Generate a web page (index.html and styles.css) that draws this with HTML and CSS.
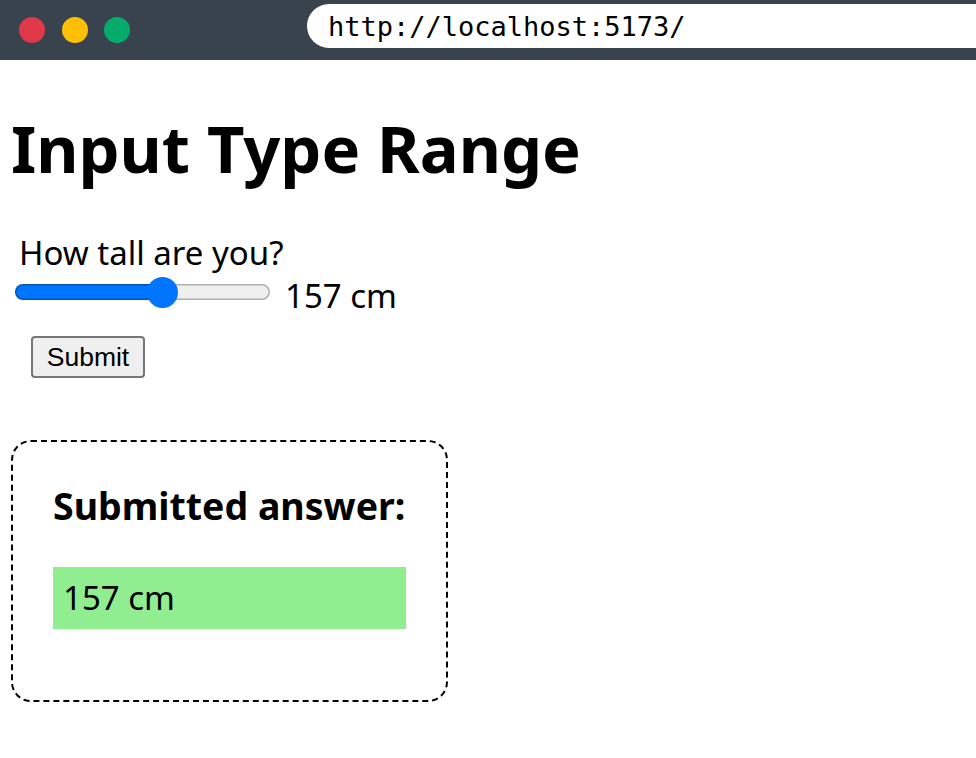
FILE: index.html
```html
<!DOCTYPE html>
<html lang="en">
<head>
<meta charset="utf-8">
<title>Input Type Range</title>
<link rel="stylesheet" href="styles.css">
</head>
<body>
<header class="chrome">
  <div class="dots">
    <span class="dot dot-red"></span>
    <span class="dot dot-yellow"></span>
    <span class="dot dot-green"></span>
  </div>
  <div class="url">http://localhost:5173/</div>
</header>
<main class="page">
  <h1 class="title">Input Type Range</h1>
  <form class="form">
    <label class="label" for="height">How tall are you?</label>
    <div class="range-row">
      <input class="height-range" id="height" type="range" min="60" max="225" value="157" style="--fill: 57.6%">
      <output class="range-value" for="height">157 cm</output>
    </div>
    <button class="submit" type="button">Submit</button>
  </form>
  <section class="result">
    <h3 class="result-title">Submitted answer:</h3>
    <div class="answer">157 cm</div>
  </section>
</main>
</body>
</html>
```

FILE: styles.css
```css
* { box-sizing: border-box; }

html, body {
  margin: 0;
  padding: 0;
  background: #ffffff;
}

body {
  font-family: "Noto Sans", "Open Sans", sans-serif;
  color: #000;
}

/* browser chrome */
.chrome {
  height: 60px;
  background: #38434e;
  display: flex;
  align-items: center;
  padding-left: 19px;
  overflow: hidden;
}

.dots {
  display: flex;
  gap: 16.5px;
}

.dot {
  width: 26px;
  height: 26px;
  border-radius: 50%;
  display: block;
}
.dot-red { background: #df3848; }
.dot-yellow { background: #fec007; }
.dot-green { background: #05ab6b; }

.url {
  margin-left: 177px;
  margin-top: -8px;
  height: 44px;
  flex: 0 0 720px;
  background: #fff;
  border-radius: 22px;
  padding-left: 21px;
  display: flex;
  align-items: center;
  font-family: "DejaVu Sans Mono", monospace;
  font-size: 27px;
  color: #000;
}

/* page */
.page {
  padding: 0 11px;
}

.title {
  margin: 44px 0 0;
  font-size: 65px;
  line-height: 88px;
  font-weight: 700;
  white-space: nowrap;
}

.form {
  margin-top: 41px;
  display: flex;
  flex-direction: column;
  align-items: flex-start;
}

.label {
  font-size: 33px;
  line-height: 40px;
  padding-left: 8px;
}

.range-row {
  display: flex;
  align-items: center;
  gap: 15px;
  height: 36px;
  margin-top: 1px;
}

.range-value {
  font-size: 33px;
  line-height: 40px;
  margin-top: 8px;
}

.height-range {
  -webkit-appearance: none;
  appearance: none;
  width: 255px;
  height: 32px;
  margin: 0 0 0 4px;
  background: transparent;
}

.height-range::-webkit-slider-runnable-track {
  height: 16px;
  border-radius: 8px;
  background: linear-gradient(90deg, #0075ff 0, #0075ff var(--fill), #efefef var(--fill));
  box-shadow: inset 0 0 0 1.5px rgba(0, 0, 0, 0.26);
}

.height-range::-webkit-slider-thumb {
  -webkit-appearance: none;
  appearance: none;
  width: 31px;
  height: 31px;
  margin-top: -7.5px;
  border-radius: 50%;
  background: #0075ff;
  border: none;
}

.submit {
  margin: 26px 0 0 20px;
  width: 114px;
  height: 42px;
  padding: 0;
  font-family: "Liberation Sans", Arial, sans-serif;
  font-size: 26.5px;
  color: #000;
  background: #efefef;
  border: 2px solid #767676;
  border-radius: 4px;
}

.result {
  margin-top: 62px;
  width: 437px;
  height: 262px;
  border: 2px dashed #000;
  border-radius: 20px;
  padding: 40px 40px;
}

.result-title {
  margin: 0;
  font-size: 37.5px;
  line-height: 48px;
  font-weight: 700;
  white-space: nowrap;
}

.answer {
  margin-top: 37px;
  height: 62px;
  background: #90ee90;
  padding-left: 10px;
  font-size: 33px;
  line-height: 62px;
}
```
